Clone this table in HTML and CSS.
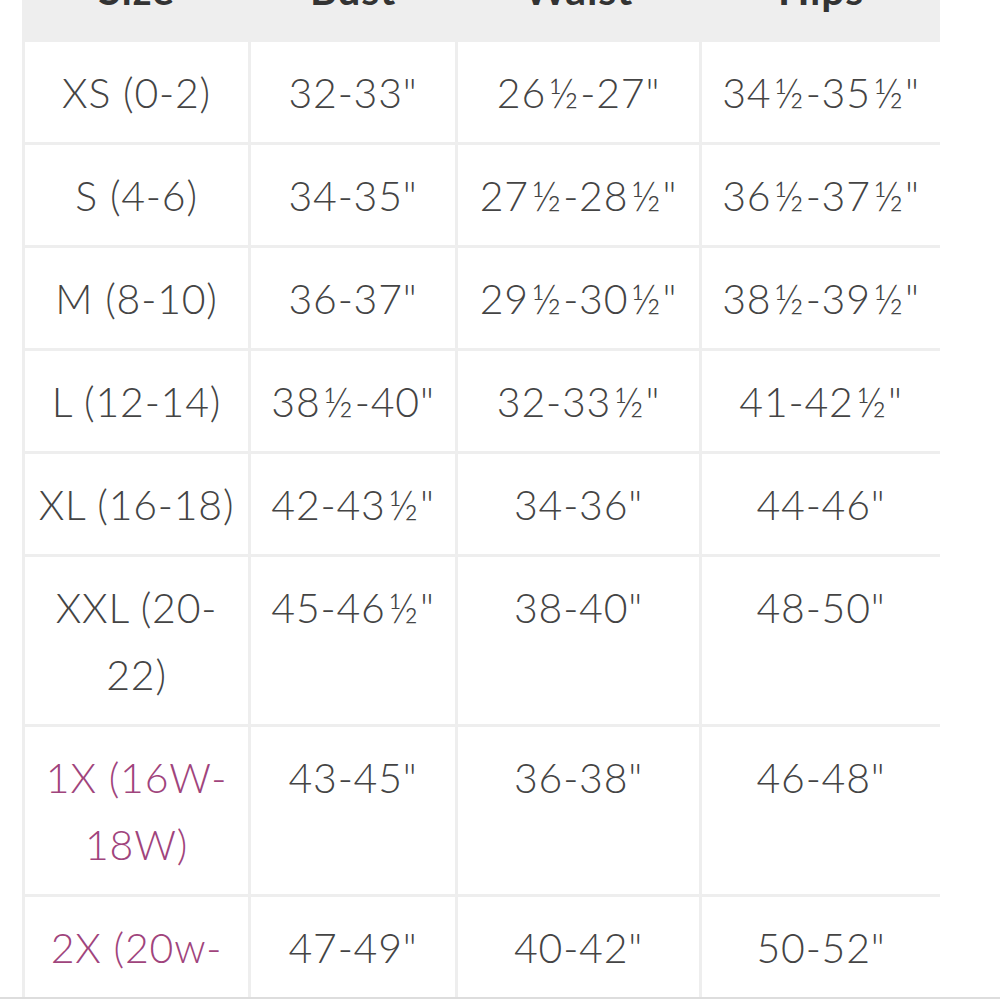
FILE: index.html
```html
<!DOCTYPE html>
<html>
<head>
<meta charset="utf-8">
<link rel="stylesheet" href="styles.css">
</head>
<body>
<div class="chart">
  <table class="sizes">
    <colgroup>
      <col class="c1"><col class="c2"><col class="c3"><col class="c4">
    </colgroup>
    <thead>
      <tr><th>Size</th><th>Bust</th><th>Waist</th><th>Hips</th></tr>
    </thead>
    <tbody>
      <tr><td>XS (0-2)</td><td>32-33"</td><td>26<span class="h">½</span>-27"</td><td>34<span class="h">½</span>-35<span class="h">½</span>"</td></tr>
      <tr><td>S (4-6)</td><td>34-35"</td><td>27<span class="h">½</span>-28<span class="h">½</span>"</td><td>36<span class="h">½</span>-37<span class="h">½</span>"</td></tr>
      <tr><td>M (8-10)</td><td>36-37"</td><td>29<span class="h">½</span>-30<span class="h">½</span>"</td><td>38<span class="h">½</span>-39<span class="h">½</span>"</td></tr>
      <tr><td>L (12-14)</td><td>38<span class="h">½</span>-40"</td><td>32-33<span class="h">½</span>"</td><td>41-42<span class="h">½</span>"</td></tr>
      <tr><td>XL (16-18)</td><td>42-43<span class="h">½</span>"</td><td>34-36"</td><td>44-46"</td></tr>
      <tr><td>XXL (20-22)</td><td>45-46<span class="h">½</span>"</td><td>38-40"</td><td>48-50"</td></tr>
      <tr><td class="plus">1X (16W-18W)</td><td>43-45"</td><td>36-38"</td><td>46-48"</td></tr>
      <tr><td class="plus">2X (20w-22w)</td><td>47-49"</td><td>40-42"</td><td>50-52"</td></tr>
    </tbody>
  </table>
</div>
<div class="edge"></div>
</body>
</html>
```
FILE: styles.css
```css
html, body {
  margin: 0;
  padding: 0;
  background: #fff;
}
body {
  font-family: Lato, "Open Sans", sans-serif;
  color: #444;
  overflow: hidden;
}
.chart {
  margin: -64px 0 0 22px;
  width: 918px;
  overflow: hidden;
}
.sizes {
  border-collapse: separate;
  border-spacing: 3px;
  background: #eee;
  table-layout: fixed;
  width: 921px;
}
.c1 { width: 223px; }
.c2 { width: 204px; }
.c3 { width: 241px; }
.c4 { width: 238px; }
.sizes th,
.sizes td {
  padding: 17px 10px 16px;
  font-size: 41px;
  line-height: 67px;
  text-align: center;
  vertical-align: top;
  letter-spacing: 0.8px;
  word-wrap: break-word;
}
.sizes th {
  background: #eee;
  color: #333;
  font-weight: 700;
}
.sizes td {
  background: #fff;
  font-weight: 300;
}
.sizes td.plus {
  color: #a0447c;
  padding-left: 12px;
  padding-right: 12px;
}
.h {
  display: inline-block;
  margin: 0 2px 0 3px;
  letter-spacing: 0;
}
.edge {
  position: fixed;
  left: 0;
  right: 0;
  bottom: 0;
  height: 2px;
  background: #ddd;
}
```
